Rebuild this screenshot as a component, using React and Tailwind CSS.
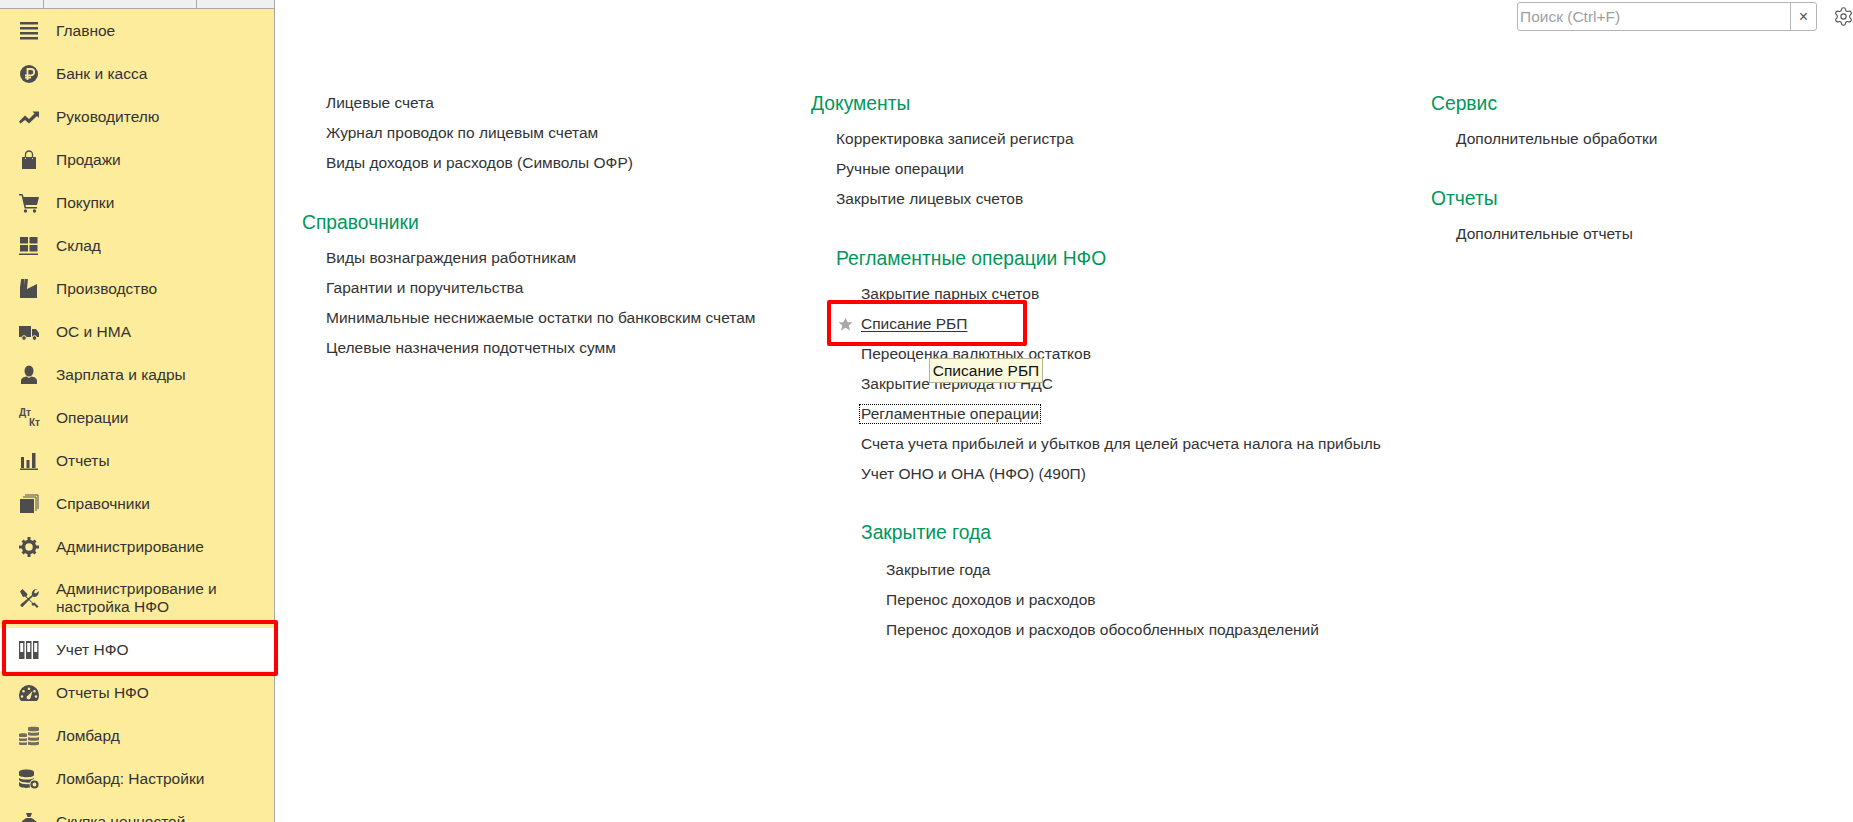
import { Settings } from 'lucide-react'

const dark = '#4d4d4d'

const Ico = ({ children }) => (
  <svg viewBox="0 0 20 20" className="w-5 h-5" fill={dark}>{children}</svg>
)

const icons = {
  menu: <Ico><path d="M1 1h18v2.400H1zM1 6h18v2.400H1zM1 11h18v2.400H1zM1 16h18v2.400H1z" /></Ico>,
  ruble: (
    <Ico>
      <circle cx="10" cy="10" r="9" />
      <path d="M8.500 16V5h3.500a3.200 3.200 0 0 1 0 6.400H6M6 13.600h6" fill="none" stroke="#fcec9c" strokeWidth="1.800" />
    </Ico>
  ),
  trend: <Ico><path d="M0 14.500l6-6 4 3.500L15.500 6.500 13.500 4.500H20V11l-2-2-8 7.500-4-3.500-4.500 3.500z" /></Ico>,
  bag: (
    <Ico>
      <path d="M3 7h3v2h1V7h6v2h1V7h3v12H3z" />
      <path d="M6.500 8V4.500a3.500 3.500 0 0 1 7 0V8" fill="none" stroke={dark} strokeWidth="1.300" />
    </Ico>
  ),
  cart: (
    <Ico>
      <path d="M0 1h3.600l1 3H20l-2 8H6.500l.4 2H18v1.400H5.600L2.600 2.400H0z" />
      <circle cx="6.500" cy="18" r="1.700" />
      <circle cx="15.500" cy="18" r="1.700" />
    </Ico>
  ),
  boxes: <Ico><path d="M1 1h8v6.500H1zM10.500 1H18.500v6.500H10.500zM1 9h8v6.500H1zM10.500 9H18.500v6.500H10.500zM0 17.500h19V19H0z" /></Ico>,
  factory: <Ico><path d="M1 19V8L2.500-2h3L5 6.500 6-1h3L8 10l10-5v14z" /></Ico>,
  truck: (
    <Ico>
      <path d="M0 4h12v11H0zM13 7h4l3 4v4h-7z" />
      <circle cx="5" cy="16" r="2.300" stroke="#fcec9c" />
      <circle cx="15.500" cy="16" r="2.300" stroke="#fcec9c" />
    </Ico>
  ),
  user: (
    <Ico>
      <ellipse cx="10" cy="6" rx="4.500" ry="5.500" />
      <path d="M2 19v-3c0-3 3-4 5.500-4.500L10 13l2.500-1.500C15 12 18 13 18 16v3z" />
    </Ico>
  ),
  barchart: <Ico><path d="M2 6h3v11H2zM7.500 9h3v8h-3zM13 2h3.500v15H13zM1 17.500h18V19H1z" /></Ico>,
  pages: (
    <Ico>
      <path d="M1 5h14v14H1z" />
      <path d="M17 17V3H4M19 15V1H6" fill="none" stroke={dark} strokeWidth="1" />
    </Ico>
  ),
  gear: (
    <Ico>
      <circle cx="10" cy="10" r="5.500" fill="none" stroke={dark} strokeWidth="3.500" />
      <path d="M8.500 0h3v4h-3zM8.500 16h3v4h-3zM0 8.500h4v3H0zM16 8.500h4v3h-4zM2.500 4.600L4.600 2.500l2.800 2.800-2.100 2.100zM12.600 14.700l2.100-2.100 2.800 2.800-2.100 2.100zM2.500 15.400l2.800-2.800 2.100 2.100-2.800 2.800zM12.600 5.300l2.800-2.800 2.100 2.100-2.800 2.800z" />
    </Ico>
  ),
  tools: (
    <Ico>
      <path d="M1 3.500L3.500 1l5 5-1 2.500L14 15l1.500-.5 4 4-1.500 1.500-3-3-1 1-1.500-1.500 .5-1.500L6 8.500l-2 .5z" />
      <path d="M19 1.500a4.500 4.500 0 0 0-6 5.500L1.500 16.500a2 2 0 0 0 2 2.500L13.500 8.500a4.500 4.500 0 0 0 6-5.500L17 5.500 15 4.500 16.500 1.500z" />
    </Ico>
  ),
  binders: (
    <Ico>
      <path d="M0 1h5.500v18H0zM7 1h5.500v18H7zM14 1h5.500v18H14z" />
      <path d="M1.200 3h3v9h-3zM8.200 3h3v9h-3zM15.200 3h3v9h-3z" fill="#fff" />
    </Ico>
  ),
  gauge: (
    <Ico>
      <path fillRule="evenodd" d="M10 2a10 10 0 0 1 10 10c0 2.500-.7 4.500-2 6H2c-1.300-1.500-2-3.500-2-6A10 10 0 0 1 10 2zM10 4.500a1.300 1.300 0 1 0 0 2.600 1.300 1.300 0 0 0 0-2.600zM4.500 7a1.300 1.300 0 1 0 0 2.600 1.300 1.300 0 0 0 0-2.600zM15.500 7a1.300 1.300 0 1 0 0 2.600 1.300 1.300 0 0 0 0-2.600zM3 12.200a1.300 1.300 0 1 0 0 2.600 1.300 1.300 0 0 0 0-2.600zM17 12.200a1.300 1.300 0 1 0 0 2.600 1.300 1.300 0 0 0 0-2.600zM13.500 8L9 12.500a2 2 0 1 0 2.500 2.500z" />
    </Ico>
  ),
  coins: (
    <Ico>
      <path d="M9 1.500C9 .500 20 .500 20 1.500v3c0 1-11 1-11 0zM9 6c0 1 11 1 11 0v3c0 1-11 1-11 0zM9 11c0 1 11 1 11 0v3c0 1-11 1-11 0zM9 15.500c0 1 11 1 11 0v3c0 1-11 1-11 0zM0 8c0-1 8-1 8 0v2.500c0 .8-8 .8-8 0zM0 12c0 .8 8 .8 8 0v2.500c0 .8-8 .8-8 0zM0 16c0 .8 8 .8 8 0v2.500c0 .8-8 .8-8 0z" opacity=".8" />
    </Ico>
  ),
  dbgear: (
    <Ico>
      <path d="M0 3c0-3.500 15-3.500 15 0v3c0 3-15 3-15 0zM0 8.500c0 2.800 15 2.800 15 0V10a5 5 0 0 0-4 3.500c-4 .5-11-.5-11-3zM0 13c2 2 6 2.500 10.500 2l.5 3.500C6 19.500 0 18.500 0 16z" />
      <circle cx="15.500" cy="15.500" r="3" fill="none" stroke={dark} strokeWidth="2.200" />
    </Ico>
  ),
  moneybag: (
    <Ico>
      <path d="M7 1h6l-1.500 4h-3zM7.500 6h5c4 2 7.500 6 7.500 10 0 2-2 3-4 3H4c-2 0-4-1-4-3 0-4 3.500-8 7.500-10z" />
    </Ico>
  ),
  dtkt: (
    <span className="block w-5 h-5 relative font-bold text-[10px] leading-none text-[#4d4d4d]">
      <span className="absolute left-0 top-0">Дт</span>
      <span className="absolute -right-[1px] bottom-0">Кт</span>
    </span>
  ),
}

const menu = [
  ['menu', 'Главное'],
  ['ruble', 'Банк и касса'],
  ['trend', 'Руководителю'],
  ['bag', 'Продажи'],
  ['cart', 'Покупки'],
  ['boxes', 'Склад'],
  ['factory', 'Производство'],
  ['truck', 'ОС и НМА'],
  ['user', 'Зарплата и кадры'],
  ['dtkt', 'Операции'],
  ['barchart', 'Отчеты'],
  ['pages', 'Справочники'],
  ['gear', 'Администрирование'],
  ['tools', 'Администрирование и настройка НФО', 'tall'],
  ['binders', 'Учет НФО', 'active'],
  ['gauge', 'Отчеты НФО'],
  ['coins', 'Ломбард'],
  ['dbgear', 'Ломбард: Настройки'],
  ['moneybag', 'Скупка ценностей'],
]

function Sidebar() {
  return (
    <aside className="w-[275px] shrink-0 h-full flex flex-col border-r border-[#a9a9a9] bg-[#fcec9c] overflow-hidden">
      <div className="h-[9px] shrink-0 bg-[#f0f0f0] border-b border-[#a9a9a9] flex">
        <div className="w-[44px] border-r border-[#a9a9a9]" />
        <div className="w-[153px] border-r border-[#a9a9a9]" />
      </div>
      {menu.map(([icon, label, kind]) => (
        <div
          key={label}
          className={`shrink-0 flex items-center pl-[19px] ${kind === 'tall' ? 'h-[60px]' : 'h-[43px]'} ${kind === 'active' ? 'bg-white' : ''}`}
        >
          <div className="w-[20px] h-[20px] shrink-0">{icons[icon]}</div>
          <div className="ml-[17px] w-[195px] leading-[18px] text-[#333]">{label}</div>
        </div>
      ))}
    </aside>
  )
}

const Link = ({ children }) => <div className="h-[30px] leading-[30px] whitespace-nowrap">{children}</div>

const Heading = ({ children }) => <div className="h-[24px] leading-[24px] text-[19.300px] text-[#00975a] whitespace-nowrap">{children}</div>

export default function App() {
  return (
    <div className="relative h-[822px] w-[1853px] overflow-hidden bg-white flex text-[15.500px] text-[#333] font-['Liberation_Sans',Arial,sans-serif]">
      <Sidebar />

      <main className="relative flex-1 flex pl-[27px] pt-[88px]">
        <div className="w-[509px] shrink-0">
          <div className="pl-[24px]">
            <Link>Лицевые счета</Link>
            <Link>Журнал проводок по лицевым счетам</Link>
            <Link>Виды доходов и расходов (Символы ОФР)</Link>
          </div>
          <div className="mt-[33px]"><Heading>Справочники</Heading></div>
          <div className="pl-[24px] mt-[8px]">
            <Link>Виды вознаграждения работникам</Link>
            <Link>Гарантии и поручительства</Link>
            <Link>Минимальные неснижаемые остатки по банковским счетам</Link>
            <Link>Целевые назначения подотчетных сумм</Link>
          </div>
        </div>

        <div className="w-[620px] shrink-0 mt-[4px]">
          <Heading>Документы</Heading>
          <div className="pl-[25px] mt-[8px]">
            <Link>Корректировка записей регистра</Link>
            <Link>Ручные операции</Link>
            <Link>Закрытие лицевых счетов</Link>
            <div className="mt-[33px]"><Heading>Регламентные операции НФО</Heading></div>
            <div className="pl-[25px] mt-[8px]">
              <Link>Закрытие парных счетов</Link>
              <div className="relative">
                <Link><span className="underline underline-offset-2">Списание РБП</span></Link>
                <svg viewBox="0 0 20 20" className="absolute -left-[23px] top-[8px] w-[15px] h-[15px]" fill="#a8a8a8">
                  <path d="M10 1l2.800 6h6.500l-5 4.300 1.800 6.700-6.100-3.700L3.900 18l1.800-6.700-5-4.300h6.500z" />
                </svg>
              </div>
              <Link>Переоценка валютных остатков</Link>
              <Link>Закрытие периода по НДС</Link>
              <div className="h-[30px] flex items-center">
                <span className="border border-dotted border-black leading-[18px] px-[1px] -ml-[2px]">Регламентные операции</span>
              </div>
              <Link>Счета учета прибылей и убытков для целей расчета налога на прибыль</Link>
              <Link>Учет ОНО и ОНА (НФО) (490П)</Link>
              <div className="mt-[32px]"><Heading>Закрытие года</Heading></div>
              <div className="pl-[25px] mt-[10px]">
                <Link>Закрытие года</Link>
                <Link>Перенос доходов и расходов</Link>
                <Link>Перенос доходов и расходов обособленных подразделений</Link>
              </div>
            </div>
          </div>
        </div>

        <div className="flex-1 mt-[4px]">
          <Heading>Сервис</Heading>
          <div className="pl-[25px] mt-[8px]"><Link>Дополнительные обработки</Link></div>
          <div className="mt-[33px]"><Heading>Отчеты</Heading></div>
          <div className="pl-[25px] mt-[8px]"><Link>Дополнительные отчеты</Link></div>
        </div>

        <div className="absolute top-[2px] left-[1242px] flex items-center">
          <div className="w-[300px] h-[29px] flex border border-[#b5b5b5] rounded-[3px] bg-white">
            <div className="flex-1 pl-[2px] leading-[27px] text-[#a0a0a0]">Поиск (Ctrl+F)</div>
            <div className="w-[26px] border-l border-[#b5b5b5] flex items-center justify-center text-[16px] text-[#555]">×</div>
          </div>
          <Settings className="ml-[16px] shrink-0 w-[21px] h-[21px] text-[#555]" strokeWidth={1.300} />
        </div>
      </main>

      {/* подсказка и красные рамки поверх страницы */}
      <div className="absolute left-[929px] top-[358px] w-[114px] h-[25px] text-center leading-[23px] bg-[#fbf9de] border border-[#b9b48d] text-[#111] whitespace-nowrap">Списание РБП</div>
      <div className="absolute left-[2px] top-[620px] w-[276px] h-[56px] border-[4px] border-[#ff0000] rounded-[2px]" />
      <div className="absolute left-[827px] top-[300px] w-[200px] h-[46px] border-[4px] border-[#ff0000] rounded-[2px]" />
    </div>
  )
}
